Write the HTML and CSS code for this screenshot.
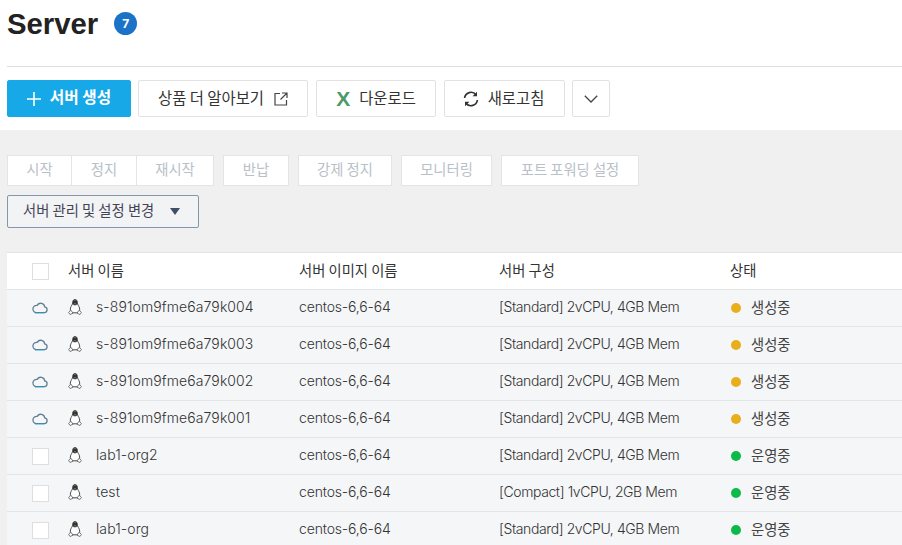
FILE: index.html
```html
<!DOCTYPE html>
<html>
  <head>
    <title>Server</title>
    <link rel="stylesheet" href="styles.css">
  </head>
  <body>
    <svg class="defs" width="0" height="0">
      <symbol id="cloud" viewBox="0 0 16 12">
        <path d="M4 10.600h8.200a2.900 2.900 0 0 0 .5-5.750A4 4 0 0 0 5.200 3.400 3.600 3.600 0 0 0 4 10.600z" fill="none" stroke="#5f7f92" stroke-width="1.300"/>
        <path d="M3 11.500h9.500" fill="none" stroke="#7fd6f0" stroke-width="1"/>
      </symbol>
      <symbol id="linux" viewBox="0 0 14 16">
        <path d="M7 .5C5.400.5 4.800 1.800 4.800 3.200c0 1.300-.3 2-1.100 3.200C2.700 8 2.100 9.500 2.400 11.600l1.700 2.200h5.800l1.700-2.200c.3-2.100-.3-3.600-1.300-5.200C9.500 5.200 9.200 4.500 9.200 3.200 9.200 1.800 8.600.5 7 .5z" fill="#fff" stroke="#4a4a4a" stroke-width="1"/>
        <path d="M5 1.200h4l.5 3.300-1.300 1.700H5.800L4.500 4.500z" fill="#333"/>
        <path d="M5.900 4.400h2.200L7 5.600z" fill="#d8b060"/>
        <path d="M.6 13.400l2.400-2.200 2 3-3 1.300zM13.400 13.400L11 11.200l-2 3 3 1.300z" fill="#fff" stroke="#6a6a6a" stroke-width=".9"/>
      </symbol>
    </svg>

    <div class="head">
      <div class="title-row">
        <h1>Server</h1>
        <span class="count">7</span>
      </div>
      <div class="toolbar">
        <button class="btn primary">
          <svg class="ico-plus" viewBox="0 0 14 14"><path d="M7 0v14M0 7h14" stroke="#fff" stroke-width="1.600" fill="none"/></svg>
          서버 생성
        </button>
        <button class="btn w-more">
          상품 더 알아보기
          <svg class="ico-link" viewBox="0 0 14 14"><path d="M6 1.500H1v11.500h11.500V8M8 1h5v5M13 1L6.500 7.500" stroke="#444" stroke-width="1.200" fill="none"/></svg>
        </button>
        <button class="btn w-down">
          <span class="excel">X</span>
          다운로드
        </button>
        <button class="btn w-refresh">
          <svg class="ico-refresh" viewBox="0 0 16 16"><path d="M1.600 7A6.500 6.500 0 0 1 13 3.600M14.400 9A6.500 6.500 0 0 1 3 12.400" stroke="#333" stroke-width="1.700" fill="none"/><path d="M14 .8v4.400H9.600zM2 15.200v-4.400h4.400z" fill="#333"/></svg>
          새로고침
        </button>
        <button class="btn w-arrow">
          <svg class="ico-chev" viewBox="0 0 14 8"><path d="M.8.8L7 7l6.200-6.200" stroke="#444" stroke-width="1.300" fill="none"/></svg>
        </button>
      </div>
    </div>

    <div class="content">
      <div class="actions">
        <div class="group">
          <span class="act w-start">시작</span>
          <span class="act w-stop">정지</span>
          <span class="act w-restart">재시작</span>
        </div>
        <span class="act solo w-return">반납</span>
        <span class="act solo w-force">강제 정지</span>
        <span class="act solo w-monitor">모니터링</span>
        <span class="act solo w-port">포트 포워딩 설정</span>
      </div>
      <div class="manage">서버 관리 및 설정 변경<i class="caret"></i></div>

      <div class="grid">
        <div class="row top">
          <div class="c-check"><span class="box"></span></div>
          <div class="c-name">서버 이름</div>
          <div class="c-image">서버 이미지 이름</div>
          <div class="c-spec">서버 구성</div>
          <div class="c-state">상태</div>
        </div>
        <div class="row">
          <div class="c-check"><svg class="cloud"><use href="#cloud"/></svg></div>
          <div class="c-name"><svg class="linux"><use href="#linux"/></svg>s-891om9fme6a79k004</div>
          <div class="c-image">centos-6,6-64</div>
          <div class="c-spec">[Standard] 2vCPU, 4GB Mem</div>
          <div class="c-state"><i class="dot wait"></i>생성중</div>
        </div>
        <div class="row">
          <div class="c-check"><svg class="cloud"><use href="#cloud"/></svg></div>
          <div class="c-name"><svg class="linux"><use href="#linux"/></svg>s-891om9fme6a79k003</div>
          <div class="c-image">centos-6,6-64</div>
          <div class="c-spec">[Standard] 2vCPU, 4GB Mem</div>
          <div class="c-state"><i class="dot wait"></i>생성중</div>
        </div>
        <div class="row">
          <div class="c-check"><svg class="cloud"><use href="#cloud"/></svg></div>
          <div class="c-name"><svg class="linux"><use href="#linux"/></svg>s-891om9fme6a79k002</div>
          <div class="c-image">centos-6,6-64</div>
          <div class="c-spec">[Standard] 2vCPU, 4GB Mem</div>
          <div class="c-state"><i class="dot wait"></i>생성중</div>
        </div>
        <div class="row">
          <div class="c-check"><svg class="cloud"><use href="#cloud"/></svg></div>
          <div class="c-name"><svg class="linux"><use href="#linux"/></svg>s-891om9fme6a79k001</div>
          <div class="c-image">centos-6,6-64</div>
          <div class="c-spec">[Standard] 2vCPU, 4GB Mem</div>
          <div class="c-state"><i class="dot wait"></i>생성중</div>
        </div>
        <div class="row">
          <div class="c-check"><span class="box"></span></div>
          <div class="c-name"><svg class="linux"><use href="#linux"/></svg>lab1-org2</div>
          <div class="c-image">centos-6,6-64</div>
          <div class="c-spec">[Standard] 2vCPU, 4GB Mem</div>
          <div class="c-state"><i class="dot run"></i>운영중</div>
        </div>
        <div class="row">
          <div class="c-check"><span class="box"></span></div>
          <div class="c-name"><svg class="linux"><use href="#linux"/></svg>test</div>
          <div class="c-image">centos-6,6-64</div>
          <div class="c-spec">[Compact] 1vCPU, 2GB Mem</div>
          <div class="c-state"><i class="dot run"></i>운영중</div>
        </div>
        <div class="row">
          <div class="c-check"><span class="box"></span></div>
          <div class="c-name"><svg class="linux"><use href="#linux"/></svg>lab1-org</div>
          <div class="c-image">centos-6,6-64</div>
          <div class="c-spec">[Standard] 2vCPU, 4GB Mem</div>
          <div class="c-state"><i class="dot run"></i>운영중</div>
        </div>
      </div>
    </div>
  </body>
</html>
```

FILE: styles.css
```css
html, body {
  height: 545px;
  overflow: hidden;
}

body {
  margin: 0;
  background-color: #fff;
  color: #333;
  font-family: "Noto Sans CJK KR", sans-serif;
  font-size: 14.300px;
}

.defs {
  display: block;
  height: 0;
}

.head {
  height: 130px;
  padding-left: 7px;
  box-sizing: border-box;
}

.title-row {
  display: flex;
  align-items: center;
  gap: 16px;
  height: 67px;
  padding-bottom: 19px;
  box-sizing: border-box;
  border-bottom: 1px solid #e0e0e0;
}

h1 {
  margin: 0;
  font-family: "Liberation Sans", sans-serif;
  font-size: 29.300px;
  font-weight: bold;
  color: #222;
}

.count {
  width: 23px;
  height: 23px;
  border-radius: 50%;
  background-color: #1a73c9;
  color: #fff;
  font-family: Inter, sans-serif;
  font-size: 12px;
  font-weight: bold;
  text-align: center;
  line-height: 23px;
}

.toolbar {
  display: flex;
  gap: 8px;
  margin-top: 13px;
}

.btn {
  display: flex;
  align-items: center;
  justify-content: center;
  height: 37px;
  padding: 0 0 4px;
  background-color: #fff;
  border: 1px solid #e2e2e2;
  border-radius: 2px;
  font-family: inherit;
  font-size: 15.400px;
  color: #333;
}

.btn svg { margin-top: 4px; }

.primary {
  width: 124px;
  gap: 9px;
  background-color: #17a8e8;
  border-color: #17a8e8;
  color: #fff;
  font-size: 15.700px;
  font-weight: bold;
}

.w-more { width: 170px; gap: 10px; margin-left: -1px; }
.w-down { width: 120px; gap: 9px; }
.w-refresh { width: 121px; gap: 9px; padding-right: 2px; }
.w-arrow { width: 38px; margin-left: -1px; }

.ico-plus { width: 14px; height: 14px; }
.ico-link { width: 14px; height: 14px; }
.ico-refresh { width: 16px; height: 16px; }
.ico-chev { width: 14px; height: 8px; }

.excel {
  margin-top: 4px;
  font-family: "Liberation Sans", sans-serif;
  font-size: 21px;
  font-weight: bold;
  color: #4c9a6a;
}

.content {
  height: 415px;
  padding: 25px 0 0 7px;
  box-sizing: border-box;
  background-color: #f0f0f0;
}

.actions {
  display: flex;
  gap: 9px;
}

.group {
  display: flex;
}

.act {
  height: 31px;
  box-sizing: border-box;
  background-color: #fff;
  border: 1px solid #e4e4e4;
  color: #b8c0c8;
  line-height: 26px;
  text-align: center;
}

.group .act + .act { border-left: 0; }

.w-start { width: 65px; }
.w-stop { width: 65px; }
.w-restart { width: 77px; }
.w-return { width: 66px; }
.w-force { width: 94px; }
.w-monitor { width: 91px; }
.w-port { width: 138px; }

.manage {
  display: flex;
  align-items: center;
  width: 192px;
  height: 33px;
  margin-top: 9px;
  padding: 0 0 4px 15px;
  box-sizing: border-box;
  border: 1px solid #8496a8;
  border-radius: 2px;
  background-color: #f2f3f5;
  color: #445;
}

.caret {
  margin: 4px 0 0 16px;
  border-left: 5.500px solid transparent;
  border-right: 5.500px solid transparent;
  border-top: 7px solid #3e5068;
}

.grid {
  margin-top: 24px;
}

.row {
  display: flex;
  align-items: center;
  height: 37px;
  box-sizing: border-box;
  border-bottom: 1px solid #e2e4e6;
  background-color: #f5f6f8;
  color: #444;
}

.row.top {
  height: 38px;
  background-color: #fff;
  border-top: 1px solid #e2e4e6;
  color: #333;
}

.c-check {
  display: flex;
  align-items: center;
  width: 61px;
  padding-left: 25px;
  box-sizing: border-box;
}

.c-name {
  display: flex;
  align-items: center;
  width: 231px;
  padding-bottom: 4px;
}

.c-image {
  width: 200px;
  padding-bottom: 4px;
}

.c-spec {
  width: 231px;
  padding-bottom: 4px;
}

.c-state {
  display: flex;
  align-items: center;
  padding-bottom: 4px;
}

.row:not(.top) .c-name,
.row:not(.top) .c-image,
.row:not(.top) .c-spec {
  font-family: Inter, sans-serif;
  font-size: 14px;
  font-weight: 300;
  color: #333;
}

.row:not(.top) .c-name { letter-spacing: .1px; }
.row:not(.top) .c-image { letter-spacing: -.15px; }
.row:not(.top) .c-spec { letter-spacing: -.4px; }

.box {
  width: 17px;
  height: 17px;
  box-sizing: border-box;
  background-color: #fff;
  border: 1px solid #dedede;
}

.cloud {
  width: 16px;
  height: 12px;
}

.linux {
  width: 14px;
  height: 16px;
  margin: 2px 14px 0 0;
}

.dot {
  width: 10px;
  height: 10px;
  margin: 4px 10px 0 1px;
  border-radius: 50%;
}

.wait { background-color: #e8ae1c; }
.run { background-color: #0cba4a; }
```
